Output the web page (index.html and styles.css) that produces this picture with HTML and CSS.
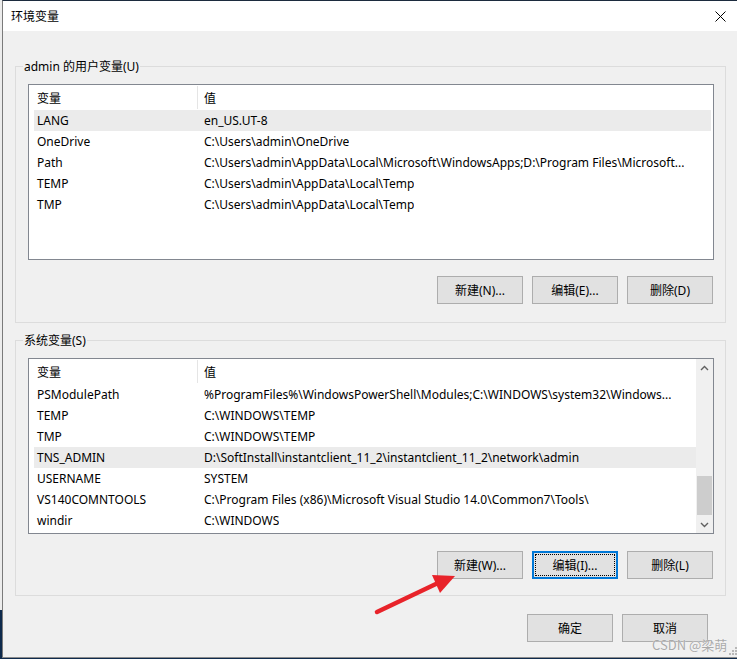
FILE: index.html
```html
<!DOCTYPE html>
<html lang="zh-CN">
<head>
<meta charset="utf-8">
<title>环境变量</title>
<link rel="stylesheet" href="styles.css">
</head>
<body>
<div class="window">
  <div class="titlebar">
    <span class="title">环境变量</span>
    <svg class="close" width="11" height="11" viewBox="0 0 11 11"><path d="M0.5 0.5 L10.5 10.5 M10.5 0.5 L0.5 10.5" stroke="#000" stroke-width="1" fill="none"/></svg>
  </div>
  <div class="content">
    <fieldset class="group group-user">
      <legend>admin 的用户变量(U)</legend>
      <div class="list">
        <div class="list-main">
          <div class="lv-header"><div class="hc hc-name">变量</div><div class="hc hc-val">值</div></div>
          <div class="row selected"><span class="c-name">LANG</span><span class="c-val">en_US.UT-8</span></div>
          <div class="row"><span class="c-name">OneDrive</span><span class="c-val">C:\Users\admin\OneDrive</span></div>
          <div class="row"><span class="c-name">Path</span><span class="c-val">C:\Users\admin\AppData\Local\Microsoft\WindowsApps;D:\Program Files\Microsoft...</span></div>
          <div class="row"><span class="c-name">TEMP</span><span class="c-val">C:\Users\admin\AppData\Local\Temp</span></div>
          <div class="row"><span class="c-name">TMP</span><span class="c-val">C:\Users\admin\AppData\Local\Temp</span></div>
        </div>
      </div>
      <div class="btnrow">
        <button class="btn">新建(N)...</button>
        <button class="btn">编辑(E)...</button>
        <button class="btn">删除(D)</button>
      </div>
    </fieldset>

    <fieldset class="group group-sys">
      <legend>系统变量(S)</legend>
      <div class="list">
        <div class="list-main">
          <div class="lv-header"><div class="hc hc-name">变量</div><div class="hc hc-val">值</div></div>
          <div class="row"><span class="c-name">PSModulePath</span><span class="c-val">%ProgramFiles%\WindowsPowerShell\Modules;C:\WINDOWS\system32\Windows...</span></div>
          <div class="row"><span class="c-name">TEMP</span><span class="c-val">C:\WINDOWS\TEMP</span></div>
          <div class="row"><span class="c-name">TMP</span><span class="c-val">C:\WINDOWS\TEMP</span></div>
          <div class="row selected"><span class="c-name">TNS_ADMIN</span><span class="c-val">D:\SoftInstall\instantclient_11_2\instantclient_11_2\network\admin</span></div>
          <div class="row"><span class="c-name">USERNAME</span><span class="c-val">SYSTEM</span></div>
          <div class="row"><span class="c-name">VS140COMNTOOLS</span><span class="c-val">C:\Program Files (x86)\Microsoft Visual Studio 14.0\Common7\Tools\</span></div>
          <div class="row"><span class="c-name">windir</span><span class="c-val">C:\WINDOWS</span></div>
        </div>
        <div class="vscroll">
          <div class="sb-btn"><svg width="9" height="6" viewBox="0 0 9 6"><path d="M1 5 L4.5 1.5 L8 5" stroke="#606060" stroke-width="1.4" fill="none"/></svg></div>
          <div class="sb-track"><div class="sb-thumb"></div></div>
          <div class="sb-btn"><svg width="9" height="6" viewBox="0 0 9 6"><path d="M1 1 L4.5 4.5 L8 1" stroke="#606060" stroke-width="1.4" fill="none"/></svg></div>
        </div>
      </div>
      <div class="btnrow">
        <button class="btn">新建(W)...</button>
        <button class="btn btn-focus"><span class="focus-ring">编辑(I)...</span></button>
        <button class="btn">删除(L)</button>
      </div>
    </fieldset>

    <div class="dialog-btns">
      <button class="btn">确定</button>
      <button class="btn">取消</button>
    </div>
  </div>
  <svg class="grip" width="8" height="8" viewBox="0 0 8 8"><g fill="#b8b8b8"><rect x="6" y="0" width="2" height="2"/><rect x="3" y="3" width="2" height="2"/><rect x="6" y="3" width="2" height="2"/><rect x="0" y="6" width="2" height="2"/><rect x="3" y="6" width="2" height="2"/><rect x="6" y="6" width="2" height="2"/></g></svg>
</div>

<svg class="arrow" width="100" height="60" viewBox="0 0 100 60">
  <line x1="7" y1="47" x2="68" y2="18" stroke="#e8232a" stroke-width="4.5" stroke-linecap="round"/>
  <polygon points="62,10 85,11 70,28" fill="#e8232a"/>
</svg>
<div class="watermark">CSDN @梁萌</div>
</body>
</html>
```

FILE: styles.css
```css
html, body {
  margin: 0;
  padding: 0;
}
body {
  width: 737px;
  height: 659px;
  overflow: hidden;
  position: relative;
  background: linear-gradient(to bottom, #ececec 0, #ececec 610px, #0e2a4c 610px, #0e2a4c 100%);
  font-family: "Noto Sans", "Noto Sans CJK SC", sans-serif;
  font-size: 12px;
  color: #000;
}
.window {
  position: relative;
  margin-left: 2px;
  width: 760px;
  height: 656px;
  background: #f0f0f0;
  border-left: 1px solid #7a7a7a;
  border-top: 1px solid #1c2b3e;
  border-bottom: 1px solid #8c8c8c;
}
.titlebar {
  height: 30px;
  background: #fff;
  display: flex;
  align-items: center;
  padding-left: 8px;
  width: 734px;
  box-sizing: border-box;
  justify-content: space-between;
  padding-right: 11px;
}
.title {
  font-family: "Noto Sans CJK SC", sans-serif;
  font-size: 12px;
  line-height: 16px;
}
.close {
  display: block;
  margin-top: 1px;
}
.content {
  padding-left: 12px;
}
.group {
  width: 711px;
  box-sizing: border-box;
  margin: 0;
  border: 1px solid #dcdcdc;
  padding: 10px 11px 18px 7px;
  min-width: 0;
}
.group-user {
  margin-top: 28px;
}
.group-sys {
  margin-top: 10px;
  padding-bottom: 16px;
}
.group legend {
  padding: 0 1px;
  line-height: 15px;
  font-size: 12px;
}
.list {
  margin-left: 5px;
  width: 686px;
  height: 176px;
  box-sizing: border-box;
  border: 1px solid #828790;
  background: #fff;
  display: flex;
  overflow: hidden;
}
.list-main {
  flex: 1;
  min-width: 0;
}
.lv-header {
  height: 25px;
  display: flex;
  align-items: center;
  margin-left: 5px;
}
.hc {
  line-height: 23px;
  font-family: "Noto Sans CJK SC", sans-serif;
}
.hc-name {
  width: 160px;
  padding-left: 3px;
  border-right: 1px solid #e5e5e5;
}
.hc-val {
  padding-left: 6px;
}
.row {
  height: 21px;
  display: flex;
  align-items: center;
  margin: 0 2px 0 5px;
  white-space: nowrap;
  overflow: hidden;
}
.group-sys .row {
  margin-right: 0;
}
.row.selected {
  background: #ebebeb;
}
.c-name {
  width: 167px;
  padding-left: 3px;
  flex: none;
}
.c-val {
  overflow: hidden;
}
.vscroll {
  width: 17px;
  flex: none;
  background: #f0f0f0;
  display: flex;
  flex-direction: column;
}
.sb-btn {
  height: 17px;
  display: flex;
  align-items: center;
  justify-content: center;
}
.sb-track {
  flex: 1;
}
.sb-thumb {
  margin: 100px 1px 0;
  height: 39px;
  background: #cdcdcd;
}
.btnrow {
  display: flex;
  justify-content: flex-end;
  gap: 9px;
  margin-top: 16px;
  padding-right: 1px;
}
.group-sys .btnrow {
  margin-top: 17px;
}
.btn {
  width: 86px;
  height: 28px;
  box-sizing: border-box;
  border: 1px solid #adadad;
  background: #e1e1e1;
  font-family: "Noto Sans", "Noto Sans CJK SC", sans-serif;
  font-size: 12px;
  color: #000;
  padding: 0;
  display: flex;
  align-items: center;
  justify-content: center;
}
.btn-focus {
  border: 2px solid #0078d7;
  padding: 1px;
}
.focus-ring {
  flex: 1;
  align-self: stretch;
  display: flex;
  align-items: center;
  justify-content: center;
  border: 1px dotted #000;
}
.dialog-btns {
  width: 711px;
  box-sizing: border-box;
  display: flex;
  justify-content: flex-end;
  gap: 9px;
  margin-top: 18px;
  padding-right: 18px;
}
.grip {
  position: absolute;
  left: 726px;
  top: 646px;
}
.arrow {
  position: absolute;
  left: 370px;
  top: 565px;
}
.watermark {
  position: absolute;
  left: 652px;
  top: 638px;
  font-family: "Noto Sans CJK SC", sans-serif;
  font-size: 13px;
  line-height: 14px;
  color: #a9a9a9;
  text-shadow: 0 0 1px #fff;
}
```
